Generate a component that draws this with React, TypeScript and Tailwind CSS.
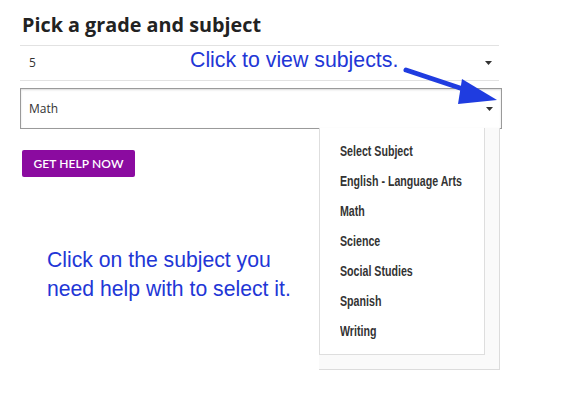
import React from "react";

const subjects = [
  "Select Subject",
  "English - Language Arts",
  "Math",
  "Science",
  "Social Studies",
  "Spanish",
  "Writing",
];

function Caret() {
  return (
    <svg width="7" height="4" viewBox="0 0 7 4" className="shrink-0">
      <path d="M0 0 L7 0 L3.5 4 Z" fill="#333" />
    </svg>
  );
}

export default function App() {
  return (
    <div className="relative w-[573px] h-[394px] bg-white overflow-hidden font-['Open_Sans',sans-serif]">
      <div className="pl-[20px] pt-[11px] w-[502px]">
        <h1 className="pl-[2px] text-[19.8px] font-bold text-[#222] leading-[28px]">
          Pick a grade and subject
        </h1>
        {/* grade select */}
        <div className="mt-[6px] h-[36px] w-[479px] border-y border-[#e2e2e2] flex items-center justify-between pl-[9px] pr-[7px]">
          <span className="text-[12px] text-[#333]">5</span>
          <Caret />
        </div>
        {/* subject select */}
        <div className="mt-[7px] h-[41px] w-[482px] border border-[#9a9a9a] shadow-[inset_0_1px_2px_rgba(0,0,0,0.15)] flex items-center justify-between pl-[8px] pr-[8px]">
          <span className="text-[12px] text-[#333]">Math</span>
          <Caret />
        </div>
        <button className="mt-[21px] ml-[2px] h-[27px] w-[113px] rounded-[2px] bg-[#8b0ba0] text-white text-[12px] font-semibold font-['Lato',sans-serif] tracking-[0.1px]">
          GET HELP NOW
        </button>
      </div>

      {/* open dropdown list */}
      <div className="absolute left-[319px] top-[128px] w-[181px] h-[242px] border-r border-b border-[#dcdcdc] bg-[#fafafa]">
        <div className="w-[166px] h-[227px] border-l border-r border-b border-[#dedede] bg-white pt-[12px] pl-[20px] flex flex-col">
          {subjects.map((s) => (
            <div
              key={s}
              className="h-[30px] leading-[22px] text-[14px] font-bold text-[#333] font-['Liberation_Sans',Arial,sans-serif] origin-left scale-x-[0.76] whitespace-nowrap"
            >
              {s}
            </div>
          ))}
        </div>
      </div>

      {/* annotations */}
      <div className="absolute left-[190px] top-[47px] text-[21.3px] leading-[27px] text-[#2236d6] font-['Liberation_Sans',Arial,sans-serif]">
        Click to view subjects.
      </div>
      <svg className="absolute left-[400px] top-[62px]" width="100" height="45" viewBox="0 0 100 45">
        <line x1="6" y1="8" x2="72" y2="30" stroke="#1f3ce0" strokeWidth="5" strokeLinecap="round" />
        <path d="M62 17 L97 38 L58 42 Z" fill="#1f3ce0" />
      </svg>
      <div className="absolute left-[47px] top-[245px] text-[21.2px] leading-[29px] text-[#2236d6] font-['Liberation_Sans',Arial,sans-serif]">
        Click on the subject you
        <br />
        need help with to select it.
      </div>
    </div>
  );
}
